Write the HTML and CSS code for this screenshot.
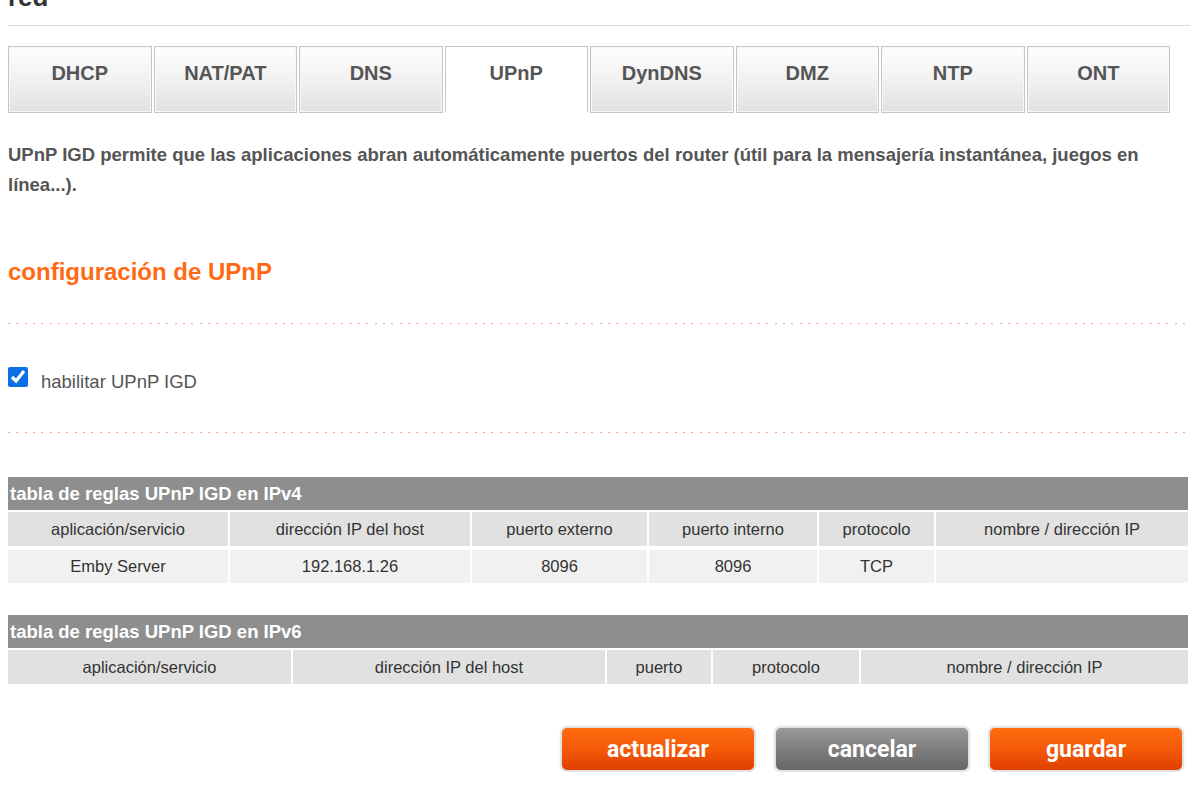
FILE: index.html
```html
<!DOCTYPE html>
<html lang="es">
<head>
<meta charset="utf-8">
<title>red - UPnP</title>
<link rel="stylesheet" href="styles.css">
</head>
<body>
<div class="page">
  <h1 class="title">red</h1>
  <nav class="tabs">
    <a class="tab">DHCP</a>
    <a class="tab">NAT/PAT</a>
    <a class="tab">DNS</a>
    <a class="tab active">UPnP</a>
    <a class="tab">DynDNS</a>
    <a class="tab">DMZ</a>
    <a class="tab">NTP</a>
    <a class="tab">ONT</a>
  </nav>
  <p class="intro">UPnP IGD permite que las aplicaciones abran automáticamente puertos del router (útil para la mensajería instantánea, juegos en línea...).</p>
  <h2 class="section">configuración de UPnP</h2>
  <div class="dots"></div>
  <label class="check"><input type="checkbox" checked><span>habilitar UPnP IGD</span></label>
  <div class="dots dots-bottom"></div>

  <table class="rules rules-v4">
    <colgroup>
      <col class="v4-c1"><col class="v4-c2"><col class="v4-c3"><col class="v4-c4"><col class="v4-c5"><col class="v4-c6">
    </colgroup>
    <thead>
      <tr><th class="caption" colspan="6">tabla de reglas UPnP IGD en IPv4</th></tr>
      <tr class="head">
        <th>aplicación/servicio</th><th>dirección IP del host</th><th>puerto externo</th><th>puerto interno</th><th>protocolo</th><th>nombre / dirección IP</th>
      </tr>
    </thead>
    <tbody>
      <tr class="data">
        <td>Emby Server</td><td>192.168.1.26</td><td>8096</td><td>8096</td><td>TCP</td><td></td>
      </tr>
    </tbody>
  </table>

  <table class="rules rules-v6">
    <colgroup>
      <col class="v6-c1"><col class="v6-c2"><col class="v6-c3"><col class="v6-c4"><col class="v6-c5">
    </colgroup>
    <thead>
      <tr><th class="caption" colspan="5">tabla de reglas UPnP IGD en IPv6</th></tr>
      <tr class="head">
        <th>aplicación/servicio</th><th>dirección IP del host</th><th>puerto</th><th>protocolo</th><th>nombre / dirección IP</th>
      </tr>
    </thead>
  </table>

  <div class="actions">
    <button class="btn btn-orange">actualizar</button>
    <button class="btn btn-gray">cancelar</button>
    <button class="btn btn-orange">guardar</button>
  </div>
</div>
</body>
</html>
```

FILE: styles.css
```css
* { box-sizing: border-box; }

html, body {
  margin: 0;
  padding: 0;
  background: #ffffff;
  overflow: hidden;
}

body {
  font-family: "Liberation Sans", Arial, sans-serif;
  color: #555555;
}

.page {
  width: 1190px;
  padding-left: 8px;
}

.title {
  margin: -18px 0 0;
  font-size: 26px;
  line-height: 30px;
  font-weight: bold;
  color: #333333;
  padding-bottom: 13px;
  border-bottom: 1px solid #d9d9d9;
}

.tabs {
  margin-top: 20px;
  width: 1162px;
  display: grid;
  grid-template-columns: repeat(8, 1fr);
  column-gap: 2px;
}

.tab {
  height: 67px;
  padding-top: 15px;
  text-align: center;
  font-size: 20px;
  line-height: 22px;
  font-weight: bold;
  color: #555555;
  background: linear-gradient(to bottom, #fefefe 0%, #f3f3f3 45%, #e1e1e1 100%);
  border: 1px solid #c6c6c6;
  box-shadow: inset 0 0 0 1px #f7f7f7;
}

.tab.active {
  background: #ffffff;
  border-bottom-color: #ffffff;
  box-shadow: none;
}

.intro {
  margin: 27px 0 0;
  font-size: 18.5px;
  line-height: 30px;
  font-weight: bold;
  color: #555555;
}

.section {
  margin: 57px 0 0;
  font-size: 24px;
  line-height: 30px;
  font-weight: bold;
  color: #ff6a13;
}

.dots {
  margin-top: 36px;
  height: 1px;
  background-image: linear-gradient(to right,
    #ff8f4f 0, #ff8f4f 2px, transparent 2px, transparent 8px,
    #ff8f4f 8px, #ff8f4f 10px, transparent 10px, transparent 17px,
    #ff8f4f 17px, #ff8f4f 19px, transparent 19px);
  background-size: 25px 1px;
  background-repeat: repeat-x;
  opacity: 0.8;
}

.check {
  display: flex;
  align-items: flex-start;
  margin-top: 43px;
  height: 20px;
  font-size: 18.5px;
  line-height: 20px;
  color: #555555;
}

.check input {
  width: 20px;
  height: 20px;
  margin: 0 13px 0 0;
  accent-color: #0b6fe6;
}

.check span {
  margin-top: 5px;
}

.dots-bottom {
  margin-top: 45px;
}

.rules {
  margin: 42px 0 0 -2px;
  width: 1184px;
  table-layout: fixed;
  border-collapse: separate;
  border-spacing: 2px;
  font-size: 16.5px;
  color: #333333;
}

.rules-v6 {
  margin-top: 28px;
}

.rules th,
.rules td {
  padding: 0;
  text-align: center;
  font-weight: normal;
}

.rules .caption {
  height: 33px;
  background: #8e8e8e;
  color: #ffffff;
  font-size: 18.5px;
  font-weight: bold;
  text-align: left;
  padding-left: 2px;
}

.rules .head th {
  height: 34px;
  background: #e1e1e1;
}

.rules .data td {
  height: 35px;
  background: #f1f1f1;
  border-top: 2px solid #ffffff;
}

.v4-c1 { width: 220px; }
.v4-c2 { width: 240px; }
.v4-c3 { width: 175px; }
.v4-c4 { width: 168px; }
.v4-c5 { width: 115px; }
.v4-c6 { width: 252px; }

.v6-c1 { width: 283px; }
.v6-c2 { width: 312px; }
.v6-c3 { width: 104px; }
.v6-c4 { width: 146px; }
.v6-c5 { width: 327px; }

.actions {
  margin-top: 40px;
  display: flex;
  justify-content: flex-end;
  gap: 18px;
  padding-right: 6px;
}

.btn {
  width: 196px;
  height: 46px;
  border: 2px solid #e3e3e3;
  border-radius: 7px;
  padding: 0;
  font-family: Roboto, "Liberation Sans", sans-serif;
  font-size: 23px;
  font-weight: bold;
  color: #ffffff;
  background-clip: padding-box;
  box-shadow: 0 0 2px rgba(0, 0, 0, 0.08);
}

.btn-orange {
  background: linear-gradient(to bottom, #ff6c10 0%, #f45a08 50%, #e03e00 100%);
}

.btn-gray {
  background: linear-gradient(to bottom, #9a9a9a 0%, #7e7e7e 50%, #666666 100%);
}
```
